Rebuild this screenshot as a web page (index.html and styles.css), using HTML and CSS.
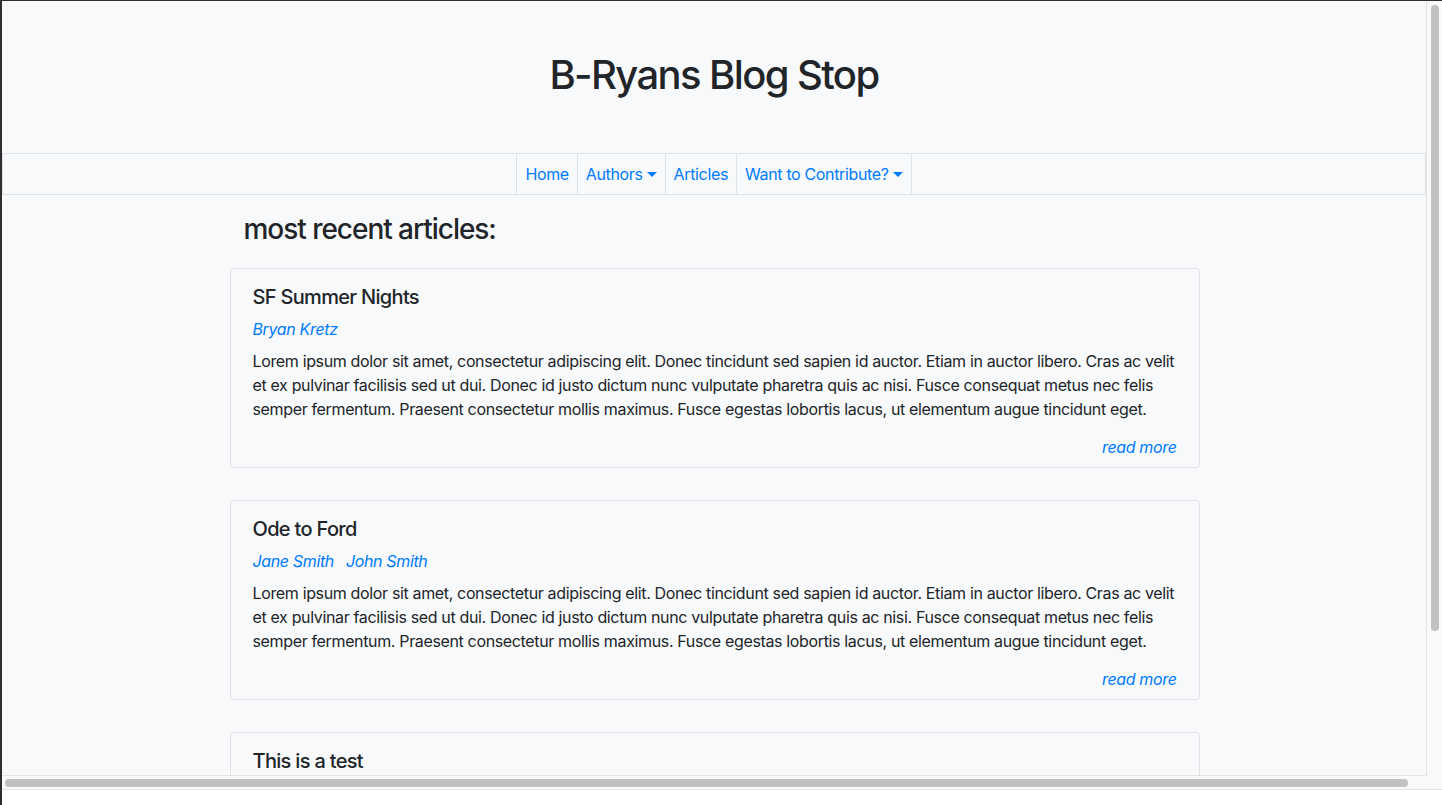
FILE: index.html
```html
<!DOCTYPE html>
<html lang="en">
<head>
<meta charset="utf-8">
<title>B-Ryans Blog Stop</title>
<link rel="stylesheet" href="styles.css">
</head>
<body>
<div class="screen">
  <div class="viewport">
    <header class="masthead">
      <h1 class="site-title">B-Ryans Blog Stop</h1>
    </header>
    <nav class="navbar">
      <ul class="nav-list">
        <li class="nav-item"><a class="nav-link" href="#">Home</a></li>
        <li class="nav-item"><a class="nav-link dropdown-toggle" href="#">Authors</a></li>
        <li class="nav-item"><a class="nav-link" href="#">Articles</a></li>
        <li class="nav-item"><a class="nav-link dropdown-toggle" href="#">Want to Contribute?</a></li>
      </ul>
    </nav>
    <main class="content">
      <h3 class="section-title">most recent articles:</h3>
      <article class="card">
        <h5 class="card-title">SF Summer Nights</h5>
        <div class="card-authors"><a class="author" href="#">Bryan Kretz</a></div>
        <p class="card-text">Lorem ipsum dolor sit amet, consectetur adipiscing elit. Donec tincidunt sed sapien id auctor. Etiam in auctor libero. Cras ac velit et ex pulvinar facilisis sed ut dui. Donec id justo dictum nunc vulputate pharetra quis ac nisi. Fusce consequat metus nec felis semper fermentum. Praesent consectetur mollis maximus. Fusce egestas lobortis lacus, ut elementum augue tincidunt eget.</p>
        <div class="card-footer"><a class="read-more" href="#">read more</a></div>
      </article>
      <article class="card">
        <h5 class="card-title">Ode to Ford</h5>
        <div class="card-authors"><a class="author" href="#">Jane Smith</a><a class="author" href="#">John Smith</a></div>
        <p class="card-text">Lorem ipsum dolor sit amet, consectetur adipiscing elit. Donec tincidunt sed sapien id auctor. Etiam in auctor libero. Cras ac velit et ex pulvinar facilisis sed ut dui. Donec id justo dictum nunc vulputate pharetra quis ac nisi. Fusce consequat metus nec felis semper fermentum. Praesent consectetur mollis maximus. Fusce egestas lobortis lacus, ut elementum augue tincidunt eget.</p>
        <div class="card-footer"><a class="read-more" href="#">read more</a></div>
      </article>
      <article class="card">
        <h5 class="card-title">This is a test</h5>
      </article>
    </main>
  </div>
  <div class="vtrack"><div class="vthumb"></div></div>
  <div class="htrack"><div class="hthumb"></div></div>
  <div class="corner"></div>
  <div class="below"></div>
</div>
</body>
</html>
```

FILE: styles.css
```css
* { box-sizing: border-box; }
html, body { margin: 0; padding: 0; }
body {
  background: #ffffff;
  font-family: Inter, "Noto Sans", "Liberation Sans", sans-serif;
  color: #212529;
  font-size: 16px;
  line-height: 1.5;
  letter-spacing: -0.022em;
}
.screen {
  width: 1442px;
  height: 805px;
  border-left: 2px solid #2e2e2e;
  border-top: 1px solid #2e2e2e;
  display: grid;
  grid-template-columns: 1fr 15px;
  grid-template-rows: 775px 13px 1fr;
  overflow: hidden;
}
.viewport {
  grid-column: 1;
  grid-row: 1;
  background: #f8f9fa;
  border-right: 1px solid #e4e4e4;
  border-bottom: 1px solid #e4e4e4;
  overflow: hidden;
}
.vtrack {
  grid-column: 2;
  grid-row: 1;
  background: #fafafa;
  padding: 4px 3px 0 4px;
}
.vthumb {
  width: 8px;
  height: 626px;
  border-radius: 4px;
  background: #c1c1c1;
}
.htrack {
  grid-column: 1;
  grid-row: 2;
  background: #fafafa;
  padding: 3px 0 0 3px;
}
.hthumb {
  width: 1403px;
  height: 8px;
  border-radius: 4px;
  background: #c1c1c1;
}
.corner {
  grid-column: 2;
  grid-row: 2;
  background: #fafafa;
}
.below {
  grid-column: 1 / span 2;
  grid-row: 3;
  background: #ffffff;
  border-top: 1px solid #e4e4e4;
}

.masthead {
  padding: 50px 0 54px;
  text-align: center;
}
.site-title {
  margin: 0;
  font-size: 40px;
  font-weight: 500;
  line-height: 1.2;
  letter-spacing: -0.04em;
}

.navbar {
  border: 1px solid #dee2e6;
  display: flex;
  justify-content: center;
}
.nav-list {
  list-style: none;
  margin: 0;
  padding: 0;
  display: flex;
}
.nav-item {
  border-right: 1px solid #dee2e6;
}
.nav-item:first-child {
  border-left: 1px solid #dee2e6;
}
.nav-link {
  display: block;
  padding: 8px 8px;
  color: #007bff;
  text-decoration: none;
}
.dropdown-toggle::after {
  content: "";
  display: inline-block;
  margin-left: 4px;
  vertical-align: 3px;
  border-top: 5px solid #007bff;
  border-left: 5px solid transparent;
  border-right: 5px solid transparent;
}

.content {
  width: 971px;
  margin: 0 auto;
  padding: 18px 0 0 1px;
}
.section-title {
  margin: 0 0 21px;
  padding-left: 14px;
  font-size: 28px;
  font-weight: 500;
  line-height: 1.2;
  letter-spacing: -0.037em;
}
.card {
  border: 1px solid #dfe1e4;
  border-radius: 4px;
  padding: 16px 22px 8px 22px;
  margin-bottom: 32px;
}
.card-title {
  margin: 0 0 8px;
  font-size: 20px;
  font-weight: 500;
  line-height: 1.2;
  letter-spacing: -0.034em;
}
.card-authors {
  display: flex;
  gap: 12px;
}
.author {
  color: #007bff;
  font-style: italic;
  text-decoration: none;
}
.card-text {
  margin: 8px 0 0;
}
.card-footer {
  margin-top: 14px;
  text-align: right;
}
.read-more {
  color: #007bff;
  font-style: italic;
  text-decoration: none;
}
```
